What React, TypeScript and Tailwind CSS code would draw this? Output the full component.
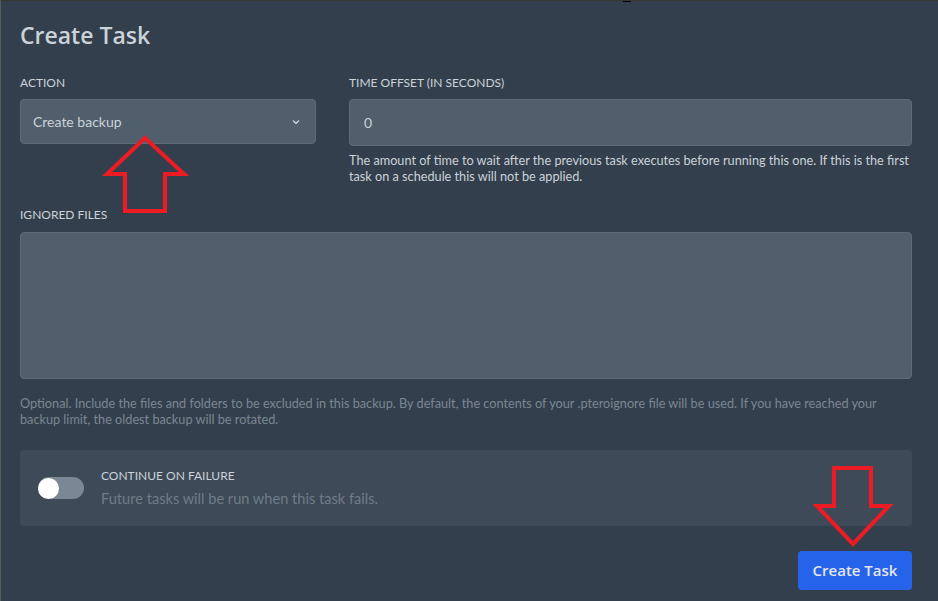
import React from "react";

function UpArrow() {
  return (
    <svg
      className="pointer-events-none absolute left-[100px] top-[130px]"
      width="90"
      height="86"
      viewBox="100 130 90 86"
    >
      <polygon
        points="144,137 106,173 124,173 124,210 164,210 164,173 183,173"
        fill="none"
        stroke="#ed1c24"
        strokeWidth="4"
      />
    </svg>
  );
}

function DownArrow() {
  return (
    <svg
      className="pointer-events-none absolute left-[810px] top-[460px]"
      width="84"
      height="90"
      viewBox="810 460 84 90"
    >
      <polygon
        points="833,467 870,467 870,505 888,505 852,543 816,505 833,505"
        fill="none"
        stroke="#ed1c24"
        strokeWidth="4"
      />
    </svg>
  );
}

export default function App() {
  return (
    <div
      className="relative h-[601px] w-[938px] overflow-hidden border-l border-t border-l-[#5a5a5a] border-t-[#3b3833] bg-[#333f4c] pl-[19px] pr-[26px] pt-[18px]"
      style={{ fontFamily: "Lato, 'Open Sans', sans-serif" }}
    >
      <span className="absolute left-[622px] top-[-1px] h-[2px] w-[8px] bg-black" />

      <h2
        className="text-[23px] font-semibold leading-8 text-[#cbd2d9]"
        style={{ fontFamily: "'Open Sans', sans-serif" }}
      >
        Create Task
      </h2>

      <div className="mt-[24px] grid grid-cols-[296px_1fr] gap-x-[33px]">
        <div>
          <label className="mb-2 block text-xs uppercase leading-4 text-[#cbd2d9]">
            Action
          </label>
          <div className="flex h-[45px] items-center justify-between rounded border border-[#5d6b78] bg-[#515f6c] pl-3 pr-[14px] text-sm text-[#cbd2d9]">
            <span>Create backup</span>
            <svg width="10" height="10" viewBox="0 0 10 10" fill="none">
              <path d="M2 3.5 5 6.5 8 3.5" stroke="#cbd2d9" strokeWidth="1.4" />
            </svg>
          </div>
        </div>
        <div>
          <label className="mb-2 block text-xs uppercase leading-4 text-[#cbd2d9]">
            Time offset (in seconds)
          </label>
          <div className="flex h-[47px] items-center rounded border border-[#5d6b78] bg-[#515f6c] px-[14px] text-sm text-[#cbd2d9]">
            0
          </div>
          <p className="mt-[6px] text-[12.7px] leading-4 text-[#cbd2d9]">
            The amount of time to wait after the previous task executes before
            running this one. If this is the first task on a schedule this will
            not be applied.
          </p>
        </div>
      </div>

      <div className="mt-[23px]">
        <label className="mb-[9px] block text-xs uppercase leading-4 text-[#cbd2d9]">
          Ignored files
        </label>
        <div className="h-[147px] rounded border border-[#5d6b78] bg-[#515f6c]" />
        <p className="mt-4 text-[12.7px] leading-4 text-[#7b8794]">
          Optional. Include the files and folders to be excluded in this
          backup. By default, the contents of your .pteroignore file will be
          used. If you have reached your backup limit, the oldest backup will
          be rotated.
        </p>
      </div>

      <div className="mt-[23px] flex h-[76px] items-center gap-[17px] rounded bg-[#3e4a57] pl-[18px]">
        <div className="flex h-[22px] w-[46px] items-center rounded-full bg-[#7b8794]">
          <div className="h-[21px] w-[21px] rounded-full bg-white" />
        </div>
        <div className="flex flex-col gap-[5px]">
          <span className="text-xs uppercase leading-4 text-[#cbd2d9]">
            Continue on failure
          </span>
          <span className="text-[14.6px] leading-5 text-[#6f7c89]">
            Future tasks will be run when this task fails.
          </span>
        </div>
      </div>

      <div className="mt-[25px] flex justify-end">
        <button
          className="h-[39px] w-[114px] rounded bg-[#2563eb] text-[15px] font-semibold text-[#e4e7eb]"
          style={{ fontFamily: "'Open Sans', sans-serif" }}
        >
          Create Task
        </button>
      </div>

      <UpArrow />
      <DownArrow />
    </div>
  );
}
